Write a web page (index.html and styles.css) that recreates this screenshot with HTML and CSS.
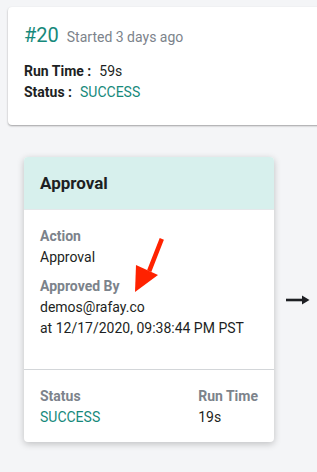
FILE: index.html
```html
<!DOCTYPE html>
<html lang="en">
<head>
    <meta charset="UTF-8">
    <meta name="viewport" content="width=device-width, initial-scale=1.0">
    <title>Pipeline Run</title>
    <link rel="stylesheet" href="styles.css">
</head>
<body>
    <div class="page">
        <div class="run-card">
            <div class="run-title"><span class="run-num">#20</span><span class="run-started">Started 3 days ago</span></div>
            <div class="run-row"><span class="run-key">Run Time :</span><span class="run-val">59s</span></div>
            <div class="run-row"><span class="run-key">Status :</span><span class="run-val success">SUCCESS</span></div>
        </div>
        <div class="stages">
            <div class="stage">
                <div class="stage-head">Approval</div>
                <div class="stage-body">
                    <div class="field">
                        <div class="label">Action</div>
                        <div class="value">Approval</div>
                    </div>
                    <div class="field">
                        <div class="label">Approved By</div>
                        <div class="value">demos@rafay.co</div>
                        <div class="value">at 12/17/2020, 09:38:44 PM PST</div>
                    </div>
                </div>
                <div class="stage-foot">
                    <div class="field">
                        <div class="label">Status</div>
                        <div class="value success">SUCCESS</div>
                    </div>
                    <div class="field">
                        <div class="label">Run Time</div>
                        <div class="value">19s</div>
                    </div>
                </div>
            </div>
            <div class="next">
                <svg width="24" height="12" viewBox="0 0 24 12"><path d="M0 6H17" stroke="#1d1f23" stroke-width="2.6"/><path d="M16 1.5L23.5 6L16 10.5Z" fill="#1d1f23"/></svg>
            </div>
        </div>
        <svg class="pointer" width="40" height="64" viewBox="0 0 40 64"><path d="M30 3L19 31" stroke="#ff2200" stroke-width="4.5" stroke-linecap="square"/><path d="M5 27L27 37L4 54Z" fill="#ff2200"/></svg>
    </div>
</body>
</html>
```

FILE: styles.css
```css
body{
    margin: 0;
    background-color: #f4f5f7;
    font-family: Roboto, "Liberation Sans", sans-serif;
    color: #1d1f23;
}
.page{
    position: relative;
    width: 317px;
    height: 472px;
    overflow: hidden;
    padding: 7px 0 0 8px;
    box-sizing: border-box;
}
.run-card{
    width: 380px;
    background-color: #fff;
    border-radius: 4px;
    box-shadow: 0 1px 2px rgba(0,0,0,0.35);
    padding: 16px 16px 22px 16px;
    box-sizing: border-box;
}
.run-title{
    display: flex;
    align-items: baseline;
    line-height: 24px;
    margin-bottom: 12px;
}
.run-num{
    font-size: 20px;
    color: #16897b;
    margin-right: 8px;
}
.run-started{
    font-size: 14px;
    color: #7c838b;
}
.run-row{
    font-size: 14px;
    line-height: 21px;
}
.run-key{
    font-weight: bold;
    margin-right: 8px;
}
.success{
    color: #16897b;
}
.stages{
    display: flex;
    align-items: center;
    margin-top: 32px;
    margin-left: 16px;
}
.stage{
    width: 250px;
    background-color: #fff;
    border-radius: 4px;
    box-shadow: 0 2px 7px rgba(0,0,0,0.22);
    overflow: hidden;
}
.stage-head{
    background-color: #d7f0ed;
    height: 52px;
    line-height: 52px;
    padding: 0 16px;
    font-size: 17px;
    font-weight: bold;
    border-bottom: 1px solid #e4e8ea;
}
.stage-body{
    height: 160px;
    padding: 16px;
    box-sizing: border-box;
    border-bottom: 1px solid #d3d6d9;
}
.field{
    font-size: 14px;
    line-height: 21px;
}
.field + .field{
    margin-top: 8px;
}
.label{
    font-weight: bold;
    color: #7c838b;
}
.stage-foot{
    display: flex;
    justify-content: space-between;
    padding: 16px 16px 14px 16px;
}
.stage-foot .field + .field{
    margin-top: 0;
}
.next{
    margin-left: 12px;
    display: flex;
}
.pointer{
    position: absolute;
    left: 131px;
    top: 238px;
}
```
